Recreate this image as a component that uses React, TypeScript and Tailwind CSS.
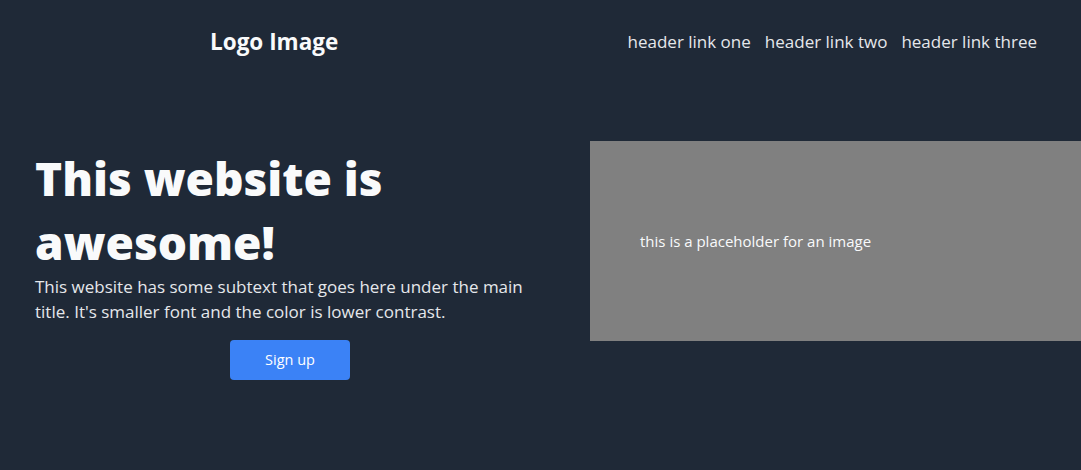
export default function App() {
  return (
    <div className="min-h-[470px] w-full bg-[#1f2937] font-['Open_Sans',sans-serif] text-[#f9fafb]">
      {/* Header */}
      <header className="flex h-[84px] items-center justify-between pl-[210px] pr-[44px]">
        <div className="text-[22.5px] font-bold">Logo Image</div>
        <nav className="flex gap-[14px] text-[17px] text-[#e5e7eb]">
          <a href="#">header link one</a>
          <a href="#">header link two</a>
          <a href="#">header link three</a>
        </nav>
      </header>

      {/* Hero */}
      <section className="mt-[57px] flex items-start gap-[45px] pl-[35px]">
        <div className="mt-[5px] flex w-[510px] flex-col">
          <h1 className="text-[46px] font-extrabold leading-[64px]">This website is awesome!</h1>
          <p className="text-[17px] leading-[25px] text-[#e5e7eb]">
            This website has some subtext that goes here under the main title. It's smaller font and the color is
            lower contrast.
          </p>
          <button className="mx-auto mt-[16px] h-10 w-[120px] rounded bg-[#3b82f6] text-[14.5px] text-white">
            Sign up
          </button>
        </div>
        <div className="flex h-[200px] flex-1 items-center bg-[#808080] pl-[50px] text-[15px] text-[#f9fafb]">
          this is a placeholder for an image
        </div>
      </section>
    </div>
  );
}
